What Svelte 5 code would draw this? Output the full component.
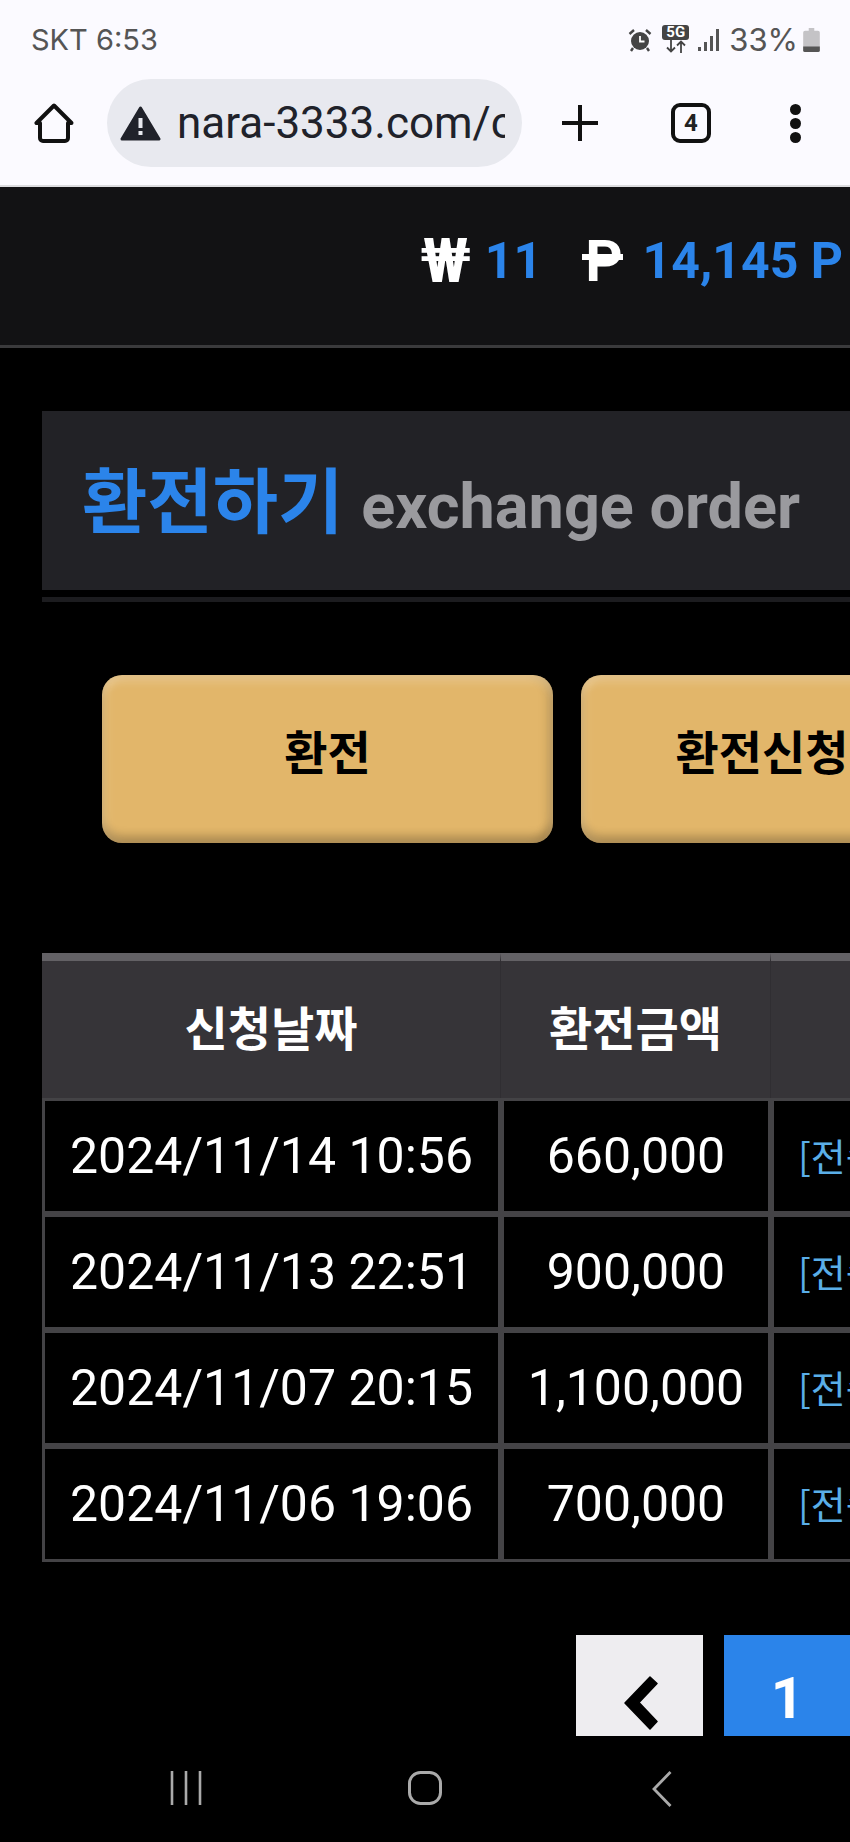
<script lang="ts">
  const rows = [
    { date: '2024/11/14 10:56', amount: '660,000' },
    { date: '2024/11/13 22:51', amount: '900,000' },
    { date: '2024/11/07 20:15', amount: '1,100,000' },
    { date: '2024/11/06 19:06', amount: '700,000' }
  ];
</script>

<div class="screen">
  <header class="chrome">
    <div class="status">
      <span class="carrier">SKT 6:53</span>
      <div class="status-icons">
        <svg class="alarm" viewBox="0 0 24 24" width="24" height="24">
          <circle cx="12" cy="13" r="9" fill="#444"/>
          <path d="M12 8v5.500h4.500" fill="none" stroke="#fff" stroke-width="1.800"/>
          <path d="M1.500 6 6 2M22.500 6 18 2M5 20l-2 3M19 20l2 3" stroke="#444" stroke-width="2.400" fill="none"/>
        </svg>
        <div class="net">
          <span class="net-5g">5G</span>
          <svg viewBox="0 0 26 13" width="26" height="13">
            <path d="M8 0v11M4 7.500l4 4 4-4M18 13V2M14 5.500l4-4 4 4" fill="none" stroke="#444" stroke-width="1.800"/>
          </svg>
        </div>
        <svg class="signal" viewBox="0 0 22 24" width="22" height="24">
          <rect x="0" y="19" width="3" height="4" fill="#555"/>
          <rect x="6" y="14" width="3" height="9" fill="#555"/>
          <rect x="12" y="8" width="3" height="15" fill="#555"/>
          <rect x="18" y="1" width="3" height="22" fill="#555"/>
        </svg>
        <span class="pct">33%</span>
        <svg class="battery" viewBox="0 0 18 26" width="17" height="24">
          <path d="M6 0h6v3h4a2 2 0 0 1 2 2v19a2 2 0 0 1-2 2H2a2 2 0 0 1-2-2V5a2 2 0 0 1 2-2h4z" fill="#c4c3c6"/>
          <path d="M0 20h18v4a2 2 0 0 1-2 2H2a2 2 0 0 1-2-2z" fill="#555"/>
        </svg>
      </div>
    </div>
    <div class="toolbar">
      <svg class="home" viewBox="0 0 40 40" width="40" height="40">
        <path d="M20 2.500 2.500 20H6v15a3 3 0 0 0 3 3h22a3 3 0 0 0 3-3V20h3.500z" fill="none" stroke="#111" stroke-width="4" stroke-linejoin="round"/>
      </svg>
      <div class="pill">
        <svg viewBox="0 0 41 35" width="41" height="35">
          <path d="M20.500 2 39 33H2z" fill="#20222a" stroke="#20222a" stroke-width="3" stroke-linejoin="round"/>
          <rect x="18.500" y="12" width="4" height="10" fill="#e8e9ef"/>
          <rect x="18.500" y="25" width="4" height="4" fill="#e8e9ef"/>
        </svg>
        <span class="url">nara-3333.com/c</span>
      </div>
      <svg class="plus" viewBox="0 0 36 36" width="36" height="36">
        <path d="M18 0v36M0 18h36" stroke="#111" stroke-width="4"/>
      </svg>
      <div class="tabs">4</div>
      <div class="dots"><i></i><i></i><i></i></div>
    </div>
  </header>

  <div class="topbar">
    <span class="won">₩</span><span class="val">11</span>
    <span class="peso">P</span><span class="val">14,145 P</span>
  </div>

  <main class="content">
    <div class="title-panel">
      <h1>환전하기</h1><span class="en">exchange order</span>
    </div>
    <div class="rule"></div>

    <div class="buttons">
      <button>환전</button>
      <button class="narrow">환전신청</button>
    </div>

    <table>
      <thead>
        <tr><th class="c1">신청날짜</th><th class="c2">환전금액</th><th class="c3"></th></tr>
      </thead>
      <tbody>
        {#each rows as row}
          <tr>
            <td class="c1">{row.date}</td>
            <td class="c2">{row.amount}</td>
            <td class="c3"><span class="link">[전송완료]</span></td>
          </tr>
        {/each}
      </tbody>
    </table>

    <div class="pager">
      <div class="page prev">
        <svg viewBox="0 0 36 54" width="36" height="54">
          <path d="M26 1 33 7.500 15 26.500 33 45.500 26 53 1 27z" fill="#000" stroke="#000" stroke-width="1.500" stroke-linejoin="round"/>
        </svg>
      </div>
      <div class="page current">1</div>
    </div>
  </main>

  <nav class="navbar">
    <svg viewBox="0 0 34 34" width="34" height="34">
      <path d="M3 0v34M17 0v34M31 0v34" stroke="#aaa" stroke-width="2.600"/>
    </svg>
    <svg viewBox="0 0 34 34" width="34" height="34">
      <rect x="1.500" y="1.500" width="31" height="31" rx="11" fill="none" stroke="#aaa" stroke-width="3"/>
    </svg>
    <svg class="back" viewBox="0 0 20 36" width="20" height="36">
      <path d="M18.500 1 2 18l16.500 17" fill="none" stroke="#aaa" stroke-width="2.800"/>
    </svg>
  </nav>
</div>

<style>
  :global(body) {
    margin: 0;
    background: #000;
  }

  .screen {
    width: 850px;
    height: 1842px;
    overflow: hidden;
    display: flex;
    flex-direction: column;
    font-family: Roboto, "Noto Sans CJK KR", sans-serif;
    background: #000;
  }

  .chrome {
    height: 185px;
    background: #fbfaff;
    border-bottom: 2px solid #dcdcdf;
    flex: none;
  }

  .status {
    height: 79px;
    display: flex;
    justify-content: space-between;
    align-items: center;
    padding: 1px 30px 0 31px;
    box-sizing: border-box;
  }

  .carrier {
    font-family: Inter, sans-serif;
    font-size: 29px;
    line-height: 34px;
    color: #555;
  }

  .status-icons {
    display: flex;
    align-items: center;
    color: #555;
  }

  .net {
    display: flex;
    flex-direction: column;
    align-items: center;
    margin: -2px 9px 0 10px;
  }

  .net-5g {
    width: 27px;
    text-align: center;
    background: #444;
    color: #fff;
    font-size: 15px;
    font-weight: 700;
    line-height: 15px;
    border-radius: 3px;
  }

  .pct {
    font-family: Inter, sans-serif;
    font-size: 31px;
    line-height: 34px;
    margin: 0 5px 0 9px;
  }

  .toolbar {
    display: flex;
    align-items: center;
    height: 88px;
    padding-left: 34px;
  }

  .pill {
    width: 415px;
    height: 88px;
    margin-left: 33px;
    border-radius: 44px;
    background: #e8e9ef;
    display: flex;
    align-items: center;
    gap: 16px;
    padding-left: 13px;
    box-sizing: border-box;
    overflow: hidden;
    flex: none;
  }

  .url {
    font-size: 44px;
    color: #20222a;
    width: 328px;
    overflow: hidden;
    white-space: nowrap;
    flex: none;
  }

  .plus {
    margin-left: 40px;
  }

  .tabs {
    width: 40px;
    height: 40px;
    margin-left: 73px;
    box-sizing: border-box;
    border: 4px solid #111;
    border-radius: 9px;
    display: flex;
    align-items: center;
    justify-content: center;
    font-size: 24px;
    font-weight: 700;
    color: #222;
  }

  .dots {
    margin-left: 79px;
    display: flex;
    flex-direction: column;
    gap: 3px;
  }

  .dots i {
    width: 11px;
    height: 11px;
    border-radius: 50%;
    background: #111;
  }

  .topbar {
    height: 161px;
    background: #121214;
    border-bottom: 3px solid #3a3a3c;
    flex: none;
    display: flex;
    align-items: center;
    justify-content: flex-end;
    padding: 0 7px 11px 0;
    box-sizing: border-box;
    font-size: 50px;
    font-weight: 700;
  }

  .won {
    color: #fff;
    font-size: 62px;
    margin-right: 14px;
  }

  .peso {
    position: relative;
    color: #fff;
    font-size: 58px;
    margin: 0 20px 0 43px;
  }

  /* single bar across the P, the glyph in Roboto has two */
  .peso::after {
    content: '';
    position: absolute;
    left: -3px;
    right: 0;
    top: 27px;
    height: 6px;
    background: #fff;
  }

  .val {
    color: #2b84ea;
  }

  .content {
    flex: 1;
    padding: 63px 0 0 42px;
    min-height: 0;
  }

  .title-panel {
    height: 179px;
    width: 830px;
    background: #222226;
    display: flex;
    align-items: center;
    padding: 4px 0 0 40px;
    box-sizing: border-box;
  }

  h1 {
    margin: 0;
    font-size: 71px;
    font-weight: 700;
    color: #2b84ea;
    line-height: 1;
  }

  .en {
    margin: 8px 0 0 18px;
    font-size: 63px;
    font-weight: 700;
    color: #9a9a9e;
  }

  .rule {
    height: 5px;
    width: 830px;
    margin-top: 7px;
    background: #1c1c1f;
  }

  .buttons {
    display: flex;
    gap: 28px;
    margin: 73px 0 0 60px;
    width: 900px;
  }

  button {
    width: 451px;
    height: 168px;
    flex: none;
    border: 0;
    padding: 0 0 20px;
    border-radius: 20px;
    background: #e2b66a;
    box-shadow: inset 0 7px 8px rgba(255, 255, 255, 0.2), inset 0 -8px 8px rgba(0, 0, 0, 0.2), inset 7px 0 8px rgba(255, 255, 255, 0.08), inset -7px 0 8px rgba(0, 0, 0, 0.1);
    font-family: "Noto Sans CJK KR", sans-serif;
    font-size: 47px;
    font-weight: 700;
    color: #000;
  }

  button.narrow {
    width: 362px;
  }

  table {
    margin-top: 110px;
    width: 1100px;
    table-layout: fixed;
    border-collapse: separate;
    border-spacing: 0;
  }

  .c1 {
    width: 459px;
  }

  .c2 {
    width: 270px;
  }

  th {
    height: 145px;
    box-sizing: border-box;
    padding-bottom: 10px;
    background: #363438;
    border-top: 8px solid #636165;
    border-right: 1px solid #302e32;
    color: #fff;
    font-family: "Noto Sans CJK KR", sans-serif;
    font-size: 47px;
    font-weight: 700;
  }

  td {
    height: 116px;
    box-sizing: border-box;
    border: 3px solid #444346;
    color: #fff;
    text-align: center;
    font-size: 50px;
  }

  td.c3 {
    text-align: left;
    padding: 0 0 4px 24px;
  }

  .link {
    color: #5aaee8;
    font-family: "Noto Sans CJK KR", sans-serif;
    font-size: 38px;
  }

  .pager {
    display: flex;
    gap: 21px;
    margin: 73px 0 0 534px;
  }

  .page {
    width: 127px;
    height: 101px;
    flex: none;
    display: flex;
    align-items: center;
    justify-content: center;
  }

  .prev {
    background: #eeedf0;
  }

  .prev svg {
    align-self: flex-start;
    margin: 41px 0 0 5px;
  }

  .current {
    background: #2b84ea;
    color: #fff;
    font-size: 58px;
    font-weight: 700;
    padding-top: 24px;
    box-sizing: border-box;
  }

  .navbar {
    height: 106px;
    flex: none;
    background: #000;
    display: flex;
    align-items: flex-start;
    padding: 35px 0 0 169px;
    box-sizing: border-box;
    gap: 205px;
  }

  .back {
    margin-left: 5px;
  }
</style>
